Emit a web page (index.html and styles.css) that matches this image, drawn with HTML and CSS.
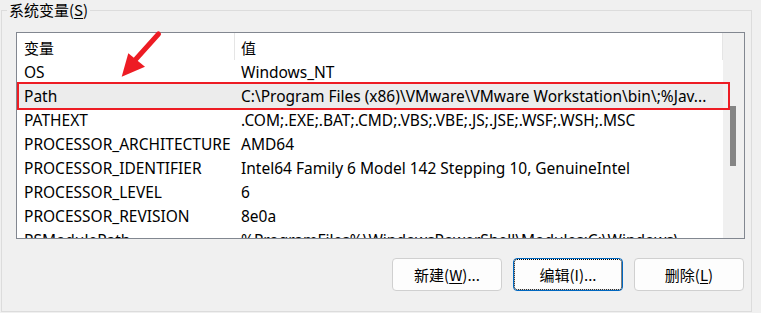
FILE: index.html
```html
<!DOCTYPE html>
<html lang="zh-CN">
<head>
<meta charset="utf-8">
<title>系统变量</title>
<link rel="stylesheet" href="styles.css">
</head>
<body>
<fieldset class="group">
  <legend class="group-title">系统变量(<u>S</u>)</legend>
  <div class="list">
    <div class="table">
      <div class="row head">
        <div class="cell c1 hc">变量</div>
        <div class="cell c2 hc">值</div>
      </div>
      <div class="row"><div class="cell c1">OS</div><div class="cell c2">Windows_NT</div></div>
      <div class="row sel"><div class="cell c1">Path</div><div class="cell c2">C:\Program Files (x86)\VMware\VMware Workstation\bin\;%Jav...</div></div>
      <div class="row"><div class="cell c1">PATHEXT</div><div class="cell c2">.COM;.EXE;.BAT;.CMD;.VBS;.VBE;.JS;.JSE;.WSF;.WSH;.MSC</div></div>
      <div class="row"><div class="cell c1">PROCESSOR_ARCHITECTURE</div><div class="cell c2">AMD64</div></div>
      <div class="row"><div class="cell c1">PROCESSOR_IDENTIFIER</div><div class="cell c2">Intel64 Family 6 Model 142 Stepping 10, GenuineIntel</div></div>
      <div class="row"><div class="cell c1">PROCESSOR_LEVEL</div><div class="cell c2">6</div></div>
      <div class="row"><div class="cell c1">PROCESSOR_REVISION</div><div class="cell c2">8e0a</div></div>
      <div class="row"><div class="cell c1">PSModulePath</div><div class="cell c2">%ProgramFiles%\WindowsPowerShell\Modules;C:\Windows\...</div></div>
    </div>
    <div class="scrollbar"><div class="thumb"></div></div>
  </div>
  <div class="actions">
    <button class="btn" type="button">新建(<u>W</u>)...</button>
    <button class="btn focus" type="button">编辑(I)...</button>
    <button class="btn" type="button">删除(<u>L</u>)</button>
  </div>
</fieldset>
<div class="mark-box"></div>
<svg class="mark-arrow" width="50" height="55" viewBox="0 0 50 55" aria-hidden="true">
  <line x1="43.5" y1="6" x2="21" y2="31" stroke="#ed1c24" stroke-width="5" stroke-linecap="round"/>
  <polygon points="6.7,48.7 13.3,25.3 30,38.7" fill="#ed1c24"/>
</svg>
</body>
</html>
```
FILE: styles.css
```css
html, body {
  margin: 0;
  background: #f0f0f0;
}
body {
  position: relative;
  width: 761px;
  height: 313px;
  overflow: hidden;
  font-family: "Noto Sans", "Noto Sans CJK SC", sans-serif;
  color: #000;
}
.group {
  box-sizing: border-box;
  margin: 0 0 0 1px;
  padding: 0;
  width: 751px;
  height: 312px;
  border: 1px solid #dcdcdc;
  min-width: 0;
}
.group-title {
  margin-left: 5px;
  padding: 0 2px;
  font: 15px/20px "Noto Sans CJK SC", sans-serif;
  color: #000;
}
.group-title u, .btn u {
  text-underline-offset: 2px;
}
.list {
  box-sizing: border-box;
  margin: 12px 0 0 14px;
  width: 729px;
  height: 207px;
  border: 1px solid #828790;
  background: #fff;
  display: flex;
  overflow: hidden;
}
.table {
  flex: 1;
  min-width: 0;
  font-size: 15.5px;
}
.row {
  display: flex;
  height: 24px;
  line-height: 24px;
  white-space: nowrap;
}
.row.sel {
  background: #ececec;
}
.cell {
  box-sizing: border-box;
  overflow: hidden;
}
.c1 {
  width: 218px;
  padding-left: 7px;
  flex: none;
}
.c2 {
  width: 488px;
  padding-left: 6px;
  flex: none;
}
.row.head {
  height: 27px;
  line-height: 23px;
}
.hc {
  padding-top: 3px;
  border-right: 1px solid #e5e5e5;
  font: 15px/23px "Noto Sans CJK SC", sans-serif;
}
.scrollbar {
  flex: none;
  width: 21px;
  background: #f0f0f0;
  padding: 73px 0 0 7px;
  box-sizing: border-box;
}
.thumb {
  width: 6px;
  height: 60px;
  background: #858585;
}
.actions {
  margin: 19px 0 0 14px;
  width: 729px;
  padding-right: 1px;
  box-sizing: border-box;
  display: flex;
  justify-content: flex-end;
  gap: 11px;
}
.btn {
  box-sizing: border-box;
  width: 110px;
  height: 33px;
  padding: 0;
  border: 1px solid #d0d0d0;
  border-radius: 4px;
  background: #fdfdfd;
  font: 15px/20px "Noto Sans CJK SC", sans-serif;
  color: #000;
}
.btn.focus {
  border-color: #0067c0;
  outline: 1px dotted #000;
  outline-offset: -2px;
}
.mark-box {
  position: absolute;
  left: 17px;
  top: 82px;
  width: 713px;
  height: 28px;
  box-sizing: border-box;
  border: 2px solid #ed1c24;
}
.mark-arrow {
  position: absolute;
  left: 115px;
  top: 28px;
}
```
